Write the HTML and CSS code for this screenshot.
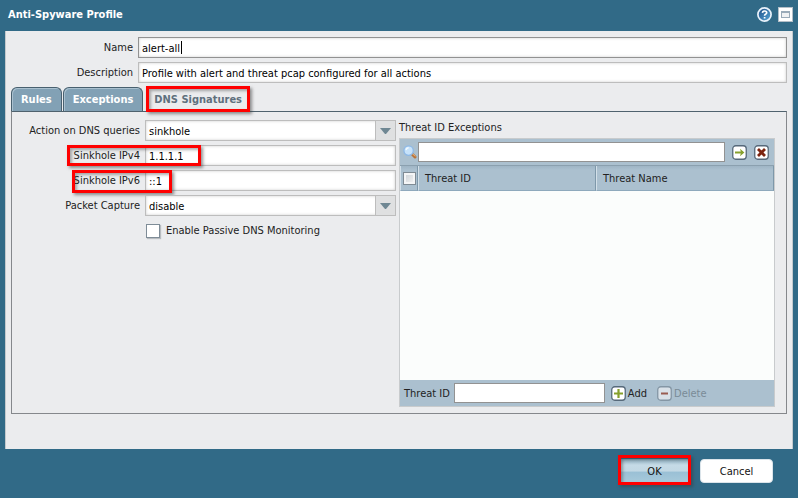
FILE: index.html
```html
<!DOCTYPE html>
<html lang="en">
<head>
<meta charset="utf-8">
<title>Anti-Spyware Profile</title>
<link rel="stylesheet" href="styles.css">
</head>
<body>
<form class="dialog">
  <header class="titlebar">
    <h1 class="title">Anti-Spyware Profile</h1>
    <button type="button" class="icon-button" aria-label="Help">
      <svg width="15" height="15" viewBox="0 0 15 15">
        <defs><linearGradient id="help" x1="0" y1="0" x2="1" y2="1"><stop offset="0" stop-color="#1d4c84"/><stop offset="1" stop-color="#5aa9d8"/></linearGradient></defs>
        <circle cx="7.5" cy="7.5" r="6.6" fill="url(#help)" stroke="#e9f2fb" stroke-width="1.7"/>
        <path d="M5.4 5.9Q5.6 4 7.6 4Q9.7 4 9.7 5.7Q9.7 6.7 8.5 7.3Q7.6 7.8 7.6 8.7M7.6 10V11.5" fill="none" stroke="#fff" stroke-width="1.7"/>
      </svg>
    </button>
    <button type="button" class="icon-button" aria-label="Maximize">
      <svg width="15" height="15" viewBox="0 0 15 15" shape-rendering="crispEdges">
        <path d="M.5 .5H14.5V14.5H.5Z" fill="#fff" stroke="#b4bfc8"/>
        <path d="M3.5 4.5H11.5V10.5H3.5Z" fill="#f0f2f4" stroke="#9aabb9"/>
        <path d="M3 5H12" stroke="#9aabb9" stroke-width="2"/>
      </svg>
    </button>
  </header>

  <main class="content">
    <div class="field">
      <label class="label" for="name">Name</label>
      <input class="input input-focus" id="name" value="alert-all">
      <span class="caret"></span>
    </div>
    <div class="field">
      <label class="label" for="description">Description</label>
      <input class="input" id="description" value="Profile with alert and threat pcap configured for all actions">
    </div>

    <div class="tabs" role="tablist">
      <button type="button" class="tab" role="tab">Rules</button>
      <button type="button" class="tab" role="tab">Exceptions</button>
      <button type="button" class="tab tab-active" role="tab" aria-selected="true">DNS Signatures<span class="mark mark-tab"></span></button>
    </div>

    <section class="panel">
      <div class="settings">
        <div class="field">
          <label class="label" for="action">Action on DNS queries</label>
          <div class="combo">
            <select class="input" id="action"><option>sinkhole</option></select>
            <span class="trigger"><svg width="11" height="6" viewBox="0 0 11 6"><path d="M0 0H11L6 6H5Z" fill="#6f8793"/></svg></span>
          </div>
        </div>
        <div class="field">
          <label class="label" for="ipv4">Sinkhole IPv4</label>
          <input class="input" id="ipv4" value="1.1.1.1">
          <span class="mark mark-ipv4"></span>
        </div>
        <div class="field">
          <label class="label" for="ipv6">Sinkhole IPv6</label>
          <input class="input" id="ipv6" value="::1">
          <span class="mark mark-ipv6"></span>
        </div>
        <div class="field">
          <label class="label" for="capture">Packet Capture</label>
          <div class="combo">
            <select class="input" id="capture"><option>disable</option></select>
            <span class="trigger"><svg width="11" height="6" viewBox="0 0 11 6"><path d="M0 0H11L6 6H5Z" fill="#6f8793"/></svg></span>
          </div>
        </div>
        <div class="check-row">
          <input type="checkbox" class="check" id="passive">
          <label for="passive">Enable Passive DNS Monitoring</label>
        </div>
      </div>

      <div class="exceptions">
        <h2 class="heading">Threat ID Exceptions</h2>
        <div class="grid">
          <div class="toolbar search">
            <svg class="lens" width="14" height="14" viewBox="0 0 14 14">
              <path d="M9.5 9.5L12 12" stroke="#b8733a" stroke-width="3" stroke-linecap="round"/>
              <path d="M9.6 8.8L12.2 11.4" stroke="#f0b878" stroke-width="1"/>
              <circle cx="5.6" cy="5.6" r="4.7" fill="#c6e2fa" stroke="#8db8e6" stroke-width="1.3"/>
              <path d="M3 5Q3.5 3 5.6 2.8" fill="none" stroke="#f2faff" stroke-width="1.4"/>
            </svg>
            <input class="box grow" aria-label="Search exceptions">
            <button type="button" class="icon-button" aria-label="Apply filter">
              <svg width="15" height="15" viewBox="0 0 15 15">
                <rect x=".75" y=".75" width="13.5" height="13.5" rx="3" fill="#fff" stroke="#56697a" stroke-width="1.3"/>
                <path d="M3 7.5H10.5" stroke="#86a02c" stroke-width="2"/>
                <path d="M8 3.8L12.4 7.5L8 11.2L9 7.5Z" fill="#86a02c"/>
              </svg>
            </button>
            <button type="button" class="icon-button" aria-label="Clear filter">
              <svg width="15" height="15" viewBox="0 0 15 15">
                <rect x=".75" y=".75" width="13.5" height="13.5" rx="3" fill="#fff" stroke="#56697a" stroke-width="1.3"/>
                <path d="M4 4L11 11M11 4L4 11" stroke="#7c2410" stroke-width="2.8"/>
              </svg>
            </button>
          </div>
          <table class="table">
            <thead>
              <tr>
                <th class="select-col"><input type="checkbox" class="check check-small" aria-label="Select all"></th>
                <th>Threat ID</th>
                <th>Threat Name</th>
              </tr>
            </thead>
          </table>
          <div class="rows"></div>
          <div class="toolbar">
            <label for="threat">Threat ID</label>
            <input class="box threat" id="threat">
            <button type="button" class="action">
              <svg width="15" height="15" viewBox="0 0 15 15">
                <rect x=".75" y=".75" width="13.5" height="13.5" rx="3" fill="#fff" stroke="#56697a" stroke-width="1.3"/>
                <path d="M7.5 3V12M3 7.5H12" stroke="#86a02c" stroke-width="2.2"/>
              </svg>Add</button>
            <button type="button" class="action" disabled>
              <svg width="15" height="15" viewBox="0 0 15 15">
                <rect x=".75" y=".75" width="13.5" height="13.5" rx="3" fill="#d9e1e8" stroke="#8496a5" stroke-width="1.3"/>
                <path d="M4 7.5H11" stroke="#985b50" stroke-width="2"/>
              </svg>Delete</button>
          </div>
        </div>
      </div>
    </section>
  </main>

  <footer class="footer">
    <button type="button" class="button button-ok">OK<span class="mark mark-ok"></span></button>
    <button type="button" class="button">Cancel</button>
  </footer>
</form>
</body>
</html>
```
FILE: styles.css
```css
* { box-sizing: border-box; }

body {
  margin: 0;
  background: #316a87;
  color: #222;
  font: 11px/15px "DejaVu Sans Condensed", "Noto Sans", sans-serif;
}

button, input, select {
  margin: 0;
  font: inherit;
  color: inherit;
}

h1, h2 { margin: 0; font-size: inherit; }

.dialog {
  display: flex;
  flex-direction: column;
  min-height: 100vh;
  padding: 0 5px;
}

.titlebar {
  display: flex;
  align-items: center;
  gap: 6px;
  height: 31px;
  padding: 0 0 2px 3px;
  color: #fff;
}

.title { flex: 1; font-weight: 700; }

.icon-button {
  display: block;
  padding: 0;
  border: 0;
  background: none;
}

.icon-button svg, .action svg { display: block; }

.content {
  display: flex;
  flex: 1;
  flex-direction: column;
  padding: 6px 5px 35px;
  border: solid #c3c9cd;
  border-width: 0 1px;
  background: #ebecee;
}

.field {
  position: relative;
  display: flex;
  gap: 5px;
  margin-bottom: 4px;
}

.label {
  width: 122px;
  padding-top: 3px;
  text-align: right;
}

.input {
  flex: 1;
  min-width: 0;
  height: 21px;
  padding: 1px 3px 0;
  border: 1px solid #bdbdbd;
  border-radius: 0;
  background: #fff;
  box-shadow: inset 0 0 3px #ccc;
  color: #000;
  outline: 0;
  appearance: none;
}

.input-focus { border-color: #929292; }

.caret {
  position: absolute;
  top: 4px;
  left: 170px;
  width: 1px;
  height: 13px;
  background: #000;
}

.tabs {
  display: flex;
  gap: 1px;
}

.tab {
  position: relative;
  height: 24px;
  padding: 0 9px;
  border: 1px solid #48606f;
  border-bottom: 0;
  border-radius: 6px 6px 0 0;
  background: #82a1b5;
  box-shadow: inset 1px 1px #a9c0cf;
  color: #fff;
  font-weight: 700;
}

.tab-active {
  border-color: transparent;
  background: none;
  box-shadow: none;
  color: #5f707d;
}

.panel {
  display: grid;
  flex: 1;
  grid-template-columns: 1fr 1fr;
  border: 1px solid #85888c;
  border-top-color: #4f626e;
}

.settings { padding: 8px 3px 0 0; }

.settings .label { width: 128px; }

.combo {
  position: relative;
  display: flex;
  flex: 1;
}

.trigger {
  position: absolute;
  top: 0;
  right: 0;
  display: grid;
  place-items: center;
  width: 21px;
  height: 21px;
  border: 1px solid #bdbdbd;
  background: #dfe0e1;
  pointer-events: none;
}

.check-row {
  display: flex;
  align-items: center;
  gap: 6px;
  padding: 3px 0 0 134px;
}

.check {
  width: 14px;
  height: 14px;
  border: 1px solid #7e8c97;
  background: #fff;
  box-shadow: 1px 1px 1px #b8bcc0;
  appearance: none;
}

.check-small {
  display: block;
  width: 13px;
  height: 13px;
  border-color: #7f8b94;
  background: linear-gradient(135deg, #c9cfd4, #f6f6f6);
  box-shadow: inset 0 0 0 2px #f4f5f6;
}

.exceptions {
  display: flex;
  flex-direction: column;
  padding: 8px 11px 6px 0;
}

.heading {
  padding-bottom: 3px;
  font-weight: 400;
}

.grid {
  display: flex;
  flex: 1;
  flex-direction: column;
  border: 1px solid #c8cbcd;
}

.toolbar {
  display: flex;
  align-items: center;
  height: 26px;
  padding: 0 4px;
  background: #abc0cf;
}

.search {
  gap: 7px;
  padding: 0 5px 0 3px;
}

.lens { margin-right: -6px; }

.box {
  min-width: 0;
  height: 20px;
  padding: 0 3px;
  border: 1px solid #929292;
  background: #fff;
}

.grow { flex: 1; }

.threat {
  width: 151px;
  margin: 0 6px 0 4px;
}

.table {
  width: 100%;
  border-collapse: separate;
  border-spacing: 0;
  border-top: 1px solid #8ba0af;
  table-layout: fixed;
}

.table th {
  height: 25px;
  padding: 0 6px;
  border-right: 1px solid #7e98aa;
  border-bottom: 1px solid #8ea9bc;
  border-left: 1px solid #d3e0e9;
  background: linear-gradient(#9fb5c5, #abc0cf 4px);
  font-weight: 400;
  text-align: left;
}

.table .select-col {
  width: 18px;
  padding: 0 2px;
}

.rows { flex: 1; background: #fbfdfc; }

.action {
  display: flex;
  align-items: center;
  gap: 2px;
  margin-right: 10px;
  padding: 0;
  border: 0;
  background: none;
}

.action:disabled { color: #7a8b97; }

.footer {
  display: flex;
  justify-content: flex-end;
  gap: 9px;
  height: 49px;
  padding: 10px 20px 0 0;
}

.button {
  position: relative;
  width: 73px;
  height: 24px;
  border: 1px solid #dbe4ea;
  border-radius: 4px;
  background: #fff;
  color: #111;
}

.button-ok {
  border: 0;
  background: linear-gradient(#88a9bb, #c5dae6 6px, #c2d8e4 50%, #9ac0d5 55%, #a8cadb);
}

/* Red callouts laid over the settings they point at */
.mark {
  position: absolute;
  border: 3px solid #f00;
  box-shadow: 2px 2px 3px rgba(60, 60, 60, .55), inset 2px 2px 3px rgba(60, 60, 60, .4);
  pointer-events: none;
}

.mark-tab { inset: -2px 1px -1px; }
.mark-ipv4 { top: 0; left: 55px; width: 134px; height: 21px; }
.mark-ipv6 { top: 0; left: 60px; width: 100px; height: 23px; }
.mark-ok { inset: -4px 0 -2px; }
```
